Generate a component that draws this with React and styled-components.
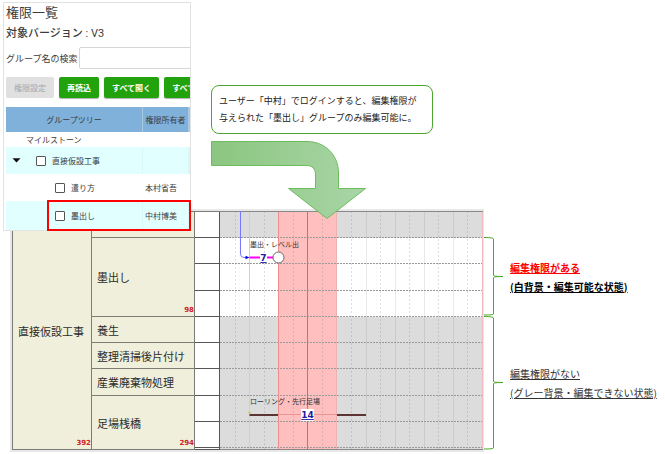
import React, { useState } from "react";
import styled, { createGlobalStyle } from "styled-components";

const colors = {
  text: "#3c3c3c",
  green: "#22a30d",
  outline: "#4ea72e",
  header: "#7fb1da",
  stripe: "#e2ffff",
  label: "#f0efdb",
  line: "#7c7c74",
  locked: "#dcdcdc",
  today: "#ffbfbf",
  count: "#cc2222",
  link: "#1c1ca8",
};

const GlobalStyle = createGlobalStyle`
  * {
    box-sizing: border-box;
  }
  body {
    margin: 0;
    background: #fff;
    color: ${colors.text};
    font-family: "Noto Sans CJK JP", "Noto Sans", sans-serif;
  }
`;

const Page = styled.main`
  padding: 2px 0 0 3px;
`;

const TopArea = styled.div`
  position: relative;
  z-index: 1;
  display: flex;
  align-items: flex-start;
  gap: 20px;
`;

/* permission panel */

const PanelWrap = styled.section`
  position: relative;
  flex: none;
  width: 188px;
`;

const Panel = styled.div`
  overflow: hidden;
  padding-left: 2px;
  background: #fff;
  border: 1px solid #e2e2e2;
`;

const Title = styled.h1`
  margin: 0;
  font-size: 13px;
  font-weight: 400;
  line-height: 18px;
`;

const Version = styled.h2`
  margin: 0;
  font-size: 11px;
  font-weight: 500;
  line-height: 22px;
  span {
    font-family: Roboto, sans-serif;
    font-weight: 400;
  }
`;

const Search = styled.div`
  display: flex;
  align-items: center;
  gap: 2px;
  margin-top: 2px;
  font-size: 9px;
  label {
    flex: none;
  }
  input {
    flex: none;
    width: 140px;
    height: 22px;
    border: 1px solid #d6d6d6;
    border-radius: 2px;
    font: inherit;
  }
`;

const Toolbar = styled.div`
  display: flex;
  gap: 5px;
  padding: 8px 0 9px;
`;

const Button = styled.button`
  flex: none;
  height: 21px;
  padding: 0 8px;
  border: 0;
  border-radius: 2px;
  background: ${colors.green};
  box-shadow: 0 1px 1px rgba(0, 0, 0, 0.3);
  color: #fff;
  font-family: inherit;
  font-size: 8px;
  font-weight: 700;
  line-height: 20px;
  white-space: nowrap;
  &:disabled {
    background: #e0e0e0;
    box-shadow: none;
    color: #a8a8a8;
    font-weight: 400;
  }
`;

const Tree = styled.table`
  width: 100%;
  table-layout: fixed;
  border-collapse: separate;
  border-spacing: 0;
  font-size: 8px;
  line-height: 12px;
  th {
    height: 25px;
    padding: 0;
    background: ${colors.header};
    border-right: 1px solid #a5c8e4;
    font-weight: 400;
    white-space: nowrap;
  }
`;

const TreeRow = styled.tr`
  height: ${(p) => p.$height}px;
  background: ${(p) => (p.$striped ? colors.stripe : "#fff")};
  td {
    padding: 0 0 0 2px;
    border-right: 1px solid ${(p) => (p.$striped ? "#d8f7f7" : "#fff")};
    white-space: nowrap;
  }
`;

const TreeNode = styled.div`
  display: flex;
  align-items: center;
  padding-left: ${(p) => p.$indent}px;
  label {
    display: flex;
    align-items: center;
    gap: 6px;
  }
`;

const Toggle = styled.button`
  display: flex;
  width: 9px;
  margin-right: 15px;
  padding: 0;
  border: 0;
  background: none;
`;

const Check = styled.input`
  appearance: none;
  width: 10px;
  height: 10px;
  margin: 0;
  border: 1px solid #555;
  border-radius: 1px;
  background: #fff;
  &:checked {
    background: ${colors.green};
  }
`;

const Highlight = styled.div`
  position: absolute;
  right: 0;
  bottom: 0;
  width: 144px;
  height: 31px;
  border: 2px solid #f00;
  pointer-events: none;
`;

/* callout */

const Explain = styled.div`
  display: flex;
  flex-direction: column;
  gap: 7px;
  padding-top: 83px;
`;

const Callout = styled.p`
  margin: 0;
  padding: 6px 16px 7px 7px;
  background: #fff;
  border: 1px solid ${colors.outline};
  border-radius: 8px;
  color: #222;
  font-size: 9px;
  line-height: 17px;
`;

/* schedule */

const BottomArea = styled.div`
  display: flex;
  align-items: flex-start;
  margin: -22px 0 0 7px;
`;

const Schedule = styled.section`
  display: flex;
  flex: none;
  padding: 2px 1px 2px 2px;
  background: #e8e8e8;
`;

const WorkTable = styled.table`
  width: 208px;
  table-layout: fixed;
  border-collapse: separate;
  border-spacing: 0;
  border-top: 1px solid ${colors.line};
  border-left: 1px solid ${colors.line};
  font-size: 11px;
  line-height: 14px;
  th,
  td {
    position: relative;
    padding: 0 0 0 5px;
    border-right: 1px solid ${colors.line};
    border-bottom: 1px solid ${colors.line};
    text-align: left;
    white-space: nowrap;
  }
  th {
    background: ${colors.label};
    color: #2c2c2c;
    font-weight: 400;
  }
  td {
    padding: 0;
    background: #fff;
    border-color: #555;
  }
`;

const WorkRow = styled.tr`
  height: ${(p) => p.$height}px;
`;

const Count = styled.span`
  position: absolute;
  right: 0;
  bottom: 1px;
  color: ${colors.count};
  font: 700 7px/9px "DejaVu Sans", sans-serif;
`;

const ChartText = styled.text`
  fill: #333;
  font-size: 7px;
`;

const ChartLink = styled.text`
  fill: ${colors.link};
  font: 700 9px "DejaVu Sans", sans-serif;
  text-anchor: middle;
  text-decoration: underline;
`;

const Notes = styled.aside`
  padding-top: 28px;
`;

const NoteRow = styled.div`
  display: flex;
  align-items: center;
  gap: 7px;
`;

const Note = styled.p`
  margin: 0;
  color: ${(p) => (p.$strong ? "#000" : "#333")};
  font-size: 10px;
  font-weight: ${(p) => (p.$strong ? 700 : 400)};
  line-height: 19px;
  text-decoration: underline;
  white-space: nowrap;
`;

const Red = styled.span`
  color: #f00;
  text-decoration: underline;
`;

const treeRows = [
  { name: "マイルストーン", height: 15, indent: 18 },
  { name: "直接仮設工事", height: 27, indent: 4, open: true, check: true },
  { name: "遣り方", owner: "本村省吾", height: 27, indent: 47, check: true },
  { name: "墨出し", owner: "中村博美", height: 29, indent: 47, check: true },
];

const workRows = [
  { height: 26, name: "", span: 1 },
  { height: 26, name: "墨出し", span: 3, count: 98 },
  { height: 27 },
  { height: 26 },
  { height: 26, name: "養生", span: 1 },
  { height: 26, name: "整理清掃後片付け", span: 1 },
  { height: 27, name: "産業廃棄物処理", span: 1 },
  { height: 26, name: "足場桟橋", span: 3, count: 294 },
  { height: 26 },
  { height: 2 },
];

const rowLines = [26, 52, 79, 105, 131, 157, 184, 210, 236];
const days = Array.from({ length: 17 }, (_, i) => i + 1);
const dayX = (i) => Math.round(i * 14.55) + 0.5;

function PermissionPanel() {
  const [checked, setChecked] = useState({});
  const toggle = (name) => setChecked({ ...checked, [name]: !checked[name] });

  return (
    <PanelWrap>
      <Panel>
        <Title>権限一覧</Title>
        <Version>
          対象バージョン<span> : V3</span>
        </Version>
        <Search>
          <label htmlFor="group-search">グループ名の検索</label>
          <input id="group-search" type="text" />
        </Search>
        <Toolbar>
          <Button disabled>権限設定</Button>
          <Button>再読込</Button>
          <Button>すべて開く</Button>
          <Button>すべて閉じる</Button>
        </Toolbar>
        <Tree>
          <colgroup>
            <col />
            <col width="46" />
            <col width="1" />
          </colgroup>
          <thead>
            <tr>
              <th>グループツリー</th>
              <th>権限所有者</th>
              <th />
            </tr>
          </thead>
          <tbody>
            {treeRows.map((row, i) => (
              <TreeRow key={row.name} $height={row.height} $striped={i % 2 === 1}>
                <td>
                  <TreeNode $indent={row.indent}>
                    {row.open && (
                      <Toggle aria-label="閉じる">
                        <svg width="9" height="5" viewBox="0 0 9 5">
                          <path d="M0.5 0.3h8L4.5 4.6z" fill="#111" />
                        </svg>
                      </Toggle>
                    )}
                    {row.check ? (
                      <label>
                        <Check
                          type="checkbox"
                          checked={!!checked[row.name]}
                          onChange={() => toggle(row.name)}
                        />
                        {row.name}
                      </label>
                    ) : (
                      row.name
                    )}
                  </TreeNode>
                </td>
                <td>{row.owner}</td>
                <td />
              </TreeRow>
            ))}
          </tbody>
        </Tree>
      </Panel>
      <Highlight />
    </PanelWrap>
  );
}

function BentArrow() {
  return (
    <svg width="156" height="79" viewBox="0 0 156 79">
      <defs>
        <linearGradient id="arrow" x1="0" x2="1" y1="0" y2="0">
          <stop offset="0" stopColor="#8bc680" />
          <stop offset="1" stopColor="#a9d5a6" />
        </linearGradient>
      </defs>
      <path
        d="M0.5 0.5H96C114 0.5 127.500 14 127.500 32V47.500H154.500L116 77.500L77.500 47.500H104.500V33C104.500 28 101 24.500 96 24.500H0.500Z"
        fill="url(#arrow)"
        stroke="#6fbc5f"
      />
    </svg>
  );
}

function Timeline() {
  return (
    <svg width="263" height="239" viewBox="0 0 263 239">
      <rect width="263" height="239" fill={colors.locked} />
      <rect y="27" width="263" height="79" fill="#fff" />
      <rect x="58" width="59" height="239" fill={colors.today} />
      {days.map((i) => (
        <line
          key={i}
          x1={dayX(i)}
          x2={dayX(i)}
          y1="0"
          y2="239"
          stroke="#777"
          strokeOpacity={i % 2 ? 0.24 : 0.16}
          strokeDasharray={i % 2 ? "2 2" : undefined}
        />
      ))}
      {rowLines.map((y) => (
        <line key={y} x2="263" y1={y + 0.5} y2={y + 0.5} stroke="#999" strokeDasharray="2 1" />
      ))}
      <path d="M29.500 0V239" stroke="#d6d69a" />
      <path d="M58.500 0V239" stroke="#ee8f8f" />
      <path d="M87.500 0V239" stroke="#a77c7c" />
      <path d="M262.500 0V239" stroke="#f3b9bf" />
      <path d="M0 0.500H263M0 238.500H263" stroke="#888" />

      <path d="M20.500 0V43Q20.500 46.500 24 46.500H26" fill="none" stroke="#7777ff" />
      <path d="M25.500 44.800L29.500 46.500L25.500 48.200Z" fill="#0000e0" />
      <path d="M29.500 46.500H58" stroke="#ff00ff" strokeWidth="2" />
      <rect x="40" y="42" width="7" height="10" fill="#fff" />
      <ChartLink x="43.5" y="50">7</ChartLink>
      <circle cx="58.500" cy="46.500" r="5.500" fill="#fff" stroke="#666" />
      <ChartText x="30" y="36">墨出・レベル出</ChartText>

      <path d="M28 201H31L29.500 203.500Z" fill="#c8c840" />
      <path d="M29.500 204H58M117 204H146" stroke="#5c3434" strokeWidth="2" />
      <path d="M58 203.500H117" stroke="#ee9292" />
      <rect x="81" y="198" width="13" height="12" fill="#fff" />
      <ChartLink x="87.5" y="207">14</ChartLink>
      <ChartText x="30" y="193">ローリング・先行足場</ChartText>
    </svg>
  );
}

function Brace({ height }) {
  const mid = Math.round(height / 2) - 0.5;
  const end = height - 1;
  return (
    <svg width="19" height={height} viewBox={`0 0 19 ${height}`}>
      <path
        d={`M0 0.500Q9.500 0.500 9.500 2V${mid - 1}Q9.500 ${mid} 19 ${mid}Q9.500 ${mid} 9.500 ${mid + 1}V${end - 1}Q9.500 ${end} 0 ${end}`}
        fill="none"
        stroke={colors.outline}
      />
    </svg>
  );
}

function App() {
  return (
    <Page>
      <GlobalStyle />
      <TopArea>
        <PermissionPanel />
        <Explain>
          <Callout>
            ユーザー「中村」でログインすると、編集権限が
            <br />
            与えられた「墨出し」グループのみ編集可能に。
          </Callout>
          <BentArrow />
        </Explain>
      </TopArea>
      <BottomArea>
        <Schedule>
          <WorkTable>
            <colgroup>
              <col width="79" />
              <col width="103" />
              <col width="25" />
            </colgroup>
            <tbody>
              {workRows.map((row, i) => (
                <WorkRow key={i} $height={row.height}>
                  {i === 0 && (
                    <th rowSpan={workRows.length}>
                      直接仮設工事<Count>392</Count>
                    </th>
                  )}
                  {row.span && (
                    <th rowSpan={row.span}>
                      {row.name}
                      {row.count && <Count>{row.count}</Count>}
                    </th>
                  )}
                  <td />
                </WorkRow>
              ))}
            </tbody>
          </WorkTable>
          <Timeline />
        </Schedule>
        <Notes>
          <NoteRow>
            <Brace height={79} />
            <Note $strong>
              <Red>編集権限がある</Red>
              <br />
              (白背景・編集可能な状態)
            </Note>
          </NoteRow>
          <NoteRow>
            <Brace height={134} />
            <Note>
              編集権限がない
              <br />
              (グレー背景・編集できない状態)
            </Note>
          </NoteRow>
        </Notes>
      </BottomArea>
    </Page>
  );
}

export default App;
